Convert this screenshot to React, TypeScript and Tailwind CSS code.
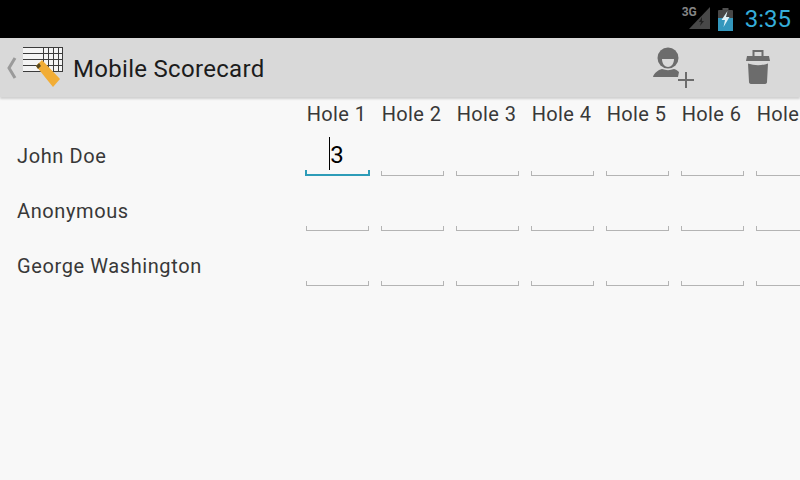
import React from "react";

const holes = [1, 2, 3, 4, 5, 6, 7];
const players = [
  { name: "John Doe", scores: ["3"] },
  { name: "Anonymous", scores: [] as string[] },
  { name: "George Washington", scores: [] as string[] },
];

function StatusBar() {
  return (
    <div className="flex h-[38px] shrink-0 items-center justify-end bg-black">
      {/* signal */}
      <div className="relative mr-[7px] h-[38px] w-[30px]">
        <span className="absolute left-px top-[6px] text-[12px] font-bold leading-[12px] text-[#858585]">3G</span>
        <svg className="absolute left-[8px] top-[7px]" width="21" height="22" viewBox="0 0 21 22">
          <path d="M21 0V22H0Z" fill="#484848" />
          <path d="M13 10l-3 5h2l-1 4 4-5h-2z" fill="#222" />
        </svg>
      </div>
      {/* battery */}
      <svg className="mr-[12px] mt-px" width="15" height="23" viewBox="0 0 15 23">
        <rect x="4.500" y="0" width="6" height="3" fill="#505050" />
        <rect x="0" y="2" width="15" height="21" rx="1" fill="#484848" />
        <rect x="0" y="10" width="15" height="13" fill="#3397bd" />
        <path d="M9.500 3L3.500 12h3.500L5.500 19l6-10H8z" fill="#dff2f8" />
      </svg>
      <span className="mr-[9px] mt-px text-[24px] leading-[37px] text-[#35aeda]">3:35</span>
    </div>
  );
}

function AppLogo() {
  return (
    <svg className="mt-px" width="42" height="42" viewBox="0 0 42 42">
      <rect x="1" y="0" width="40" height="25" fill="#f4f4f4" />
      <path
        d="M1 .5H41M1 6.500H41M1 12.500H41M1 18.500H41M1 24.500H41M21.500 0V25M26.500 0V25M31.500 0V25M36.500 0V25M40.500 0V25"
        stroke="#3c3c3c"
        strokeWidth="1"
        fill="none"
      />
      <path d="M14 19l6-6 18 19-7 8z" fill="#f2ad35" />
      <path d="M14 19l3-3 2 3-3 3z" fill="#5a4a20" />
    </svg>
  );
}

function ActionBar() {
  return (
    <div className="relative flex h-[59px] shrink-0 items-center bg-[#d9d9d9] shadow-[0_2px_2px_rgba(0,0,0,0.16)]">
      <svg className="ml-[6px] mr-[5px]" width="11" height="22" viewBox="0 0 11 22">
        <path d="M9 1L3 11l6 10" stroke="#9a9a9a" strokeWidth="3" fill="none" />
      </svg>
      <AppLogo />
      <span className="ml-[9px] mt-[3px] text-[24px] leading-[32px] tracking-[0.3px] text-[#1c1c1c]">
        Mobile Scorecard
      </span>
      <div className="ml-auto flex items-center">
        <svg className="mr-[51px] mt-px" width="44" height="44" viewBox="0 0 44 44">
          <circle cx="17" cy="12" r="10.500" fill="#6c6c6c" />
          <path d="M11 13h12c0 5-3 8-6 8s-6-3-6-8z" fill="#d9d9d9" />
          <path d="M2 31c1-4 5-7 9-8 4 1.500 8 1.500 12 0 2 .5 4 2 5 3l-1 5z" fill="#6c6c6c" />
          <path d="M35 26v16M27 34h16" stroke="#6c6c6c" strokeWidth="2" />
        </svg>
        <svg className="mr-[30px] mt-px" width="24" height="44" viewBox="0 0 24 44">
          <path d="M7.500 10V5h9v5" stroke="#6c6c6c" strokeWidth="2" fill="none" />
          <path d="M1 10h22l1 5H0z" fill="#6c6c6c" />
          <path d="M2 17.500Q12 21 22 17.500L21 36q0 2-3 2H6q-3 0-3-2z" fill="#6c6c6c" />
        </svg>
      </div>
    </div>
  );
}

function ScoreCell({ value, focused }: { value?: string; focused?: boolean }) {
  return (
    <div className="relative flex h-[55px] w-[75px] shrink-0 flex-col justify-end px-[6px] pb-[7px]">
      {value && (
        <span className="absolute left-0 right-0 top-[10px] pr-px text-center text-[24px] leading-[34px] text-black">
          {value}
        </span>
      )}
      {focused && <span className="absolute left-[29px] top-[9px] h-[33px] w-px bg-black" />}
      <div
        className={
          focused
            ? "-mx-px h-[6px] border-x-2 border-b-2 border-[#2d9cb8]"
            : "h-[5px] border-x border-b border-[#b4b4b4]"
        }
      />
    </div>
  );
}

export default function App() {
  return (
    <div className="flex h-[480px] w-[800px] flex-col overflow-hidden bg-[#f8f8f8] font-['Roboto',sans-serif]">
      <StatusBar />
      <ActionBar />
      <div className="flex h-[31px] shrink-0 items-center pl-[300px] pt-[3px]">
        {holes.map((h) => (
          <span
            key={h}
            className="w-[75px] shrink-0 whitespace-nowrap pr-[2px] text-center text-[20px] leading-[28px] tracking-[0.4px] text-[#383838]"
          >
            Hole {h}
          </span>
        ))}
      </div>
      {players.map((p, i) => (
        <div key={p.name} className="flex shrink-0">
          <div className="flex h-[55px] w-[300px] shrink-0 items-center pl-[17px] text-[20px] tracking-[0.6px] text-[#383838]">
            {p.name}
          </div>
          {holes.map((h, j) => (
            <ScoreCell key={h} value={p.scores[j]} focused={i === 0 && j === 0} />
          ))}
        </div>
      ))}
    </div>
  );
}
